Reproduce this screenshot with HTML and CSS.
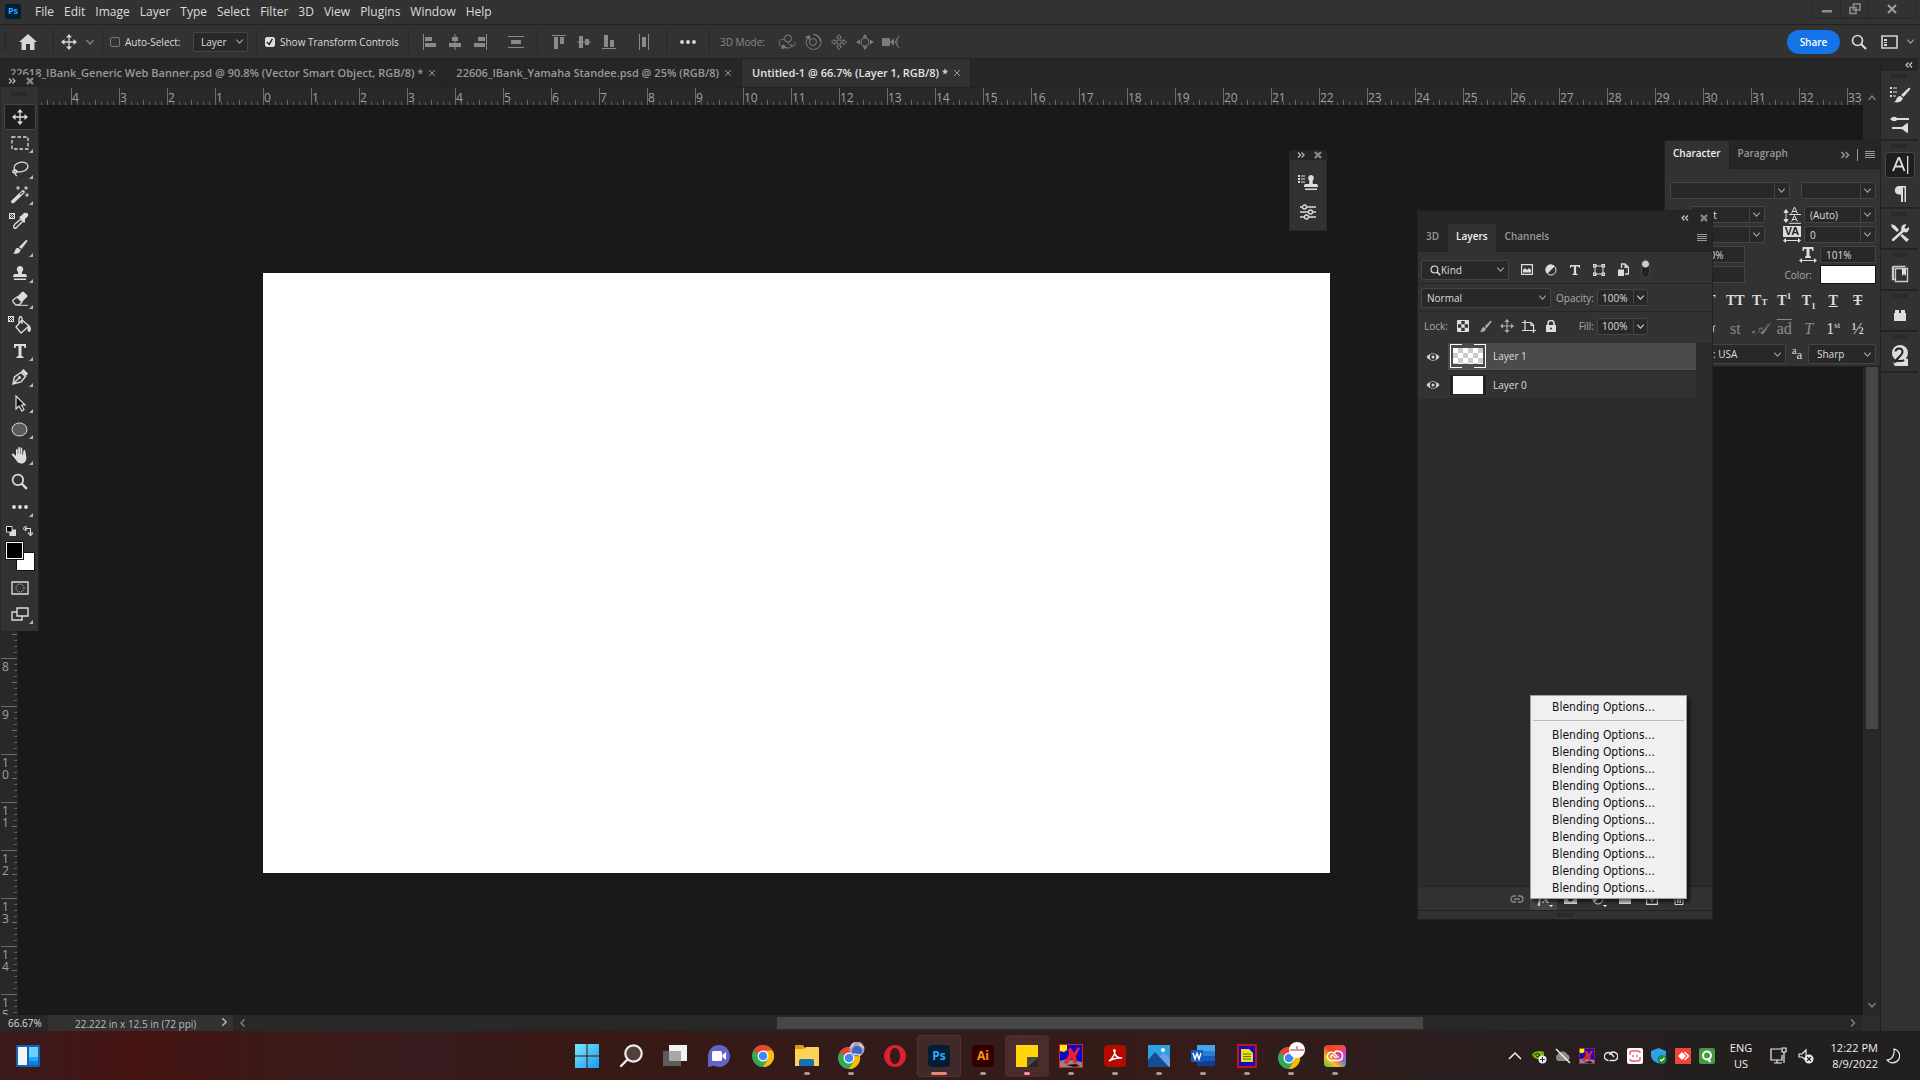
FILE: index.html
```html
<!DOCTYPE html>
<html lang="en">
<head>
<meta charset="utf-8">
<title>Untitled-1 @ 66.7%</title>
<link rel="stylesheet" href="styles.css">
</head>
<body>
<svg class="defs" aria-hidden="true">
  <symbol id="move" viewBox="0 0 16 16"><path d="M8 2.500v11M2.500 8h11" stroke="currentColor" stroke-width="1.300"/><path d="M8 0l3 3.500H5zM8 16l3-3.500H5zM0 8l3.500-3v6zM16 8l-3.500-3v6z" fill="currentColor"/></symbol>
  <symbol id="down" viewBox="0 0 10 10"><path d="M1.500 3L5 7l3.500-4" fill="none" stroke="currentColor" stroke-width="1.200"/></symbol>
  <symbol id="up" viewBox="0 0 10 10"><path d="M1.500 7L5 3l3.500 4" fill="none" stroke="currentColor" stroke-width="1.200"/></symbol>
  <symbol id="right" viewBox="0 0 10 10"><path d="M3 1.500L6.500 5 3 8.500" fill="none" stroke="currentColor" stroke-width="1.300"/></symbol>
  <symbol id="left" viewBox="0 0 10 10"><path d="M6.500 1.500L3 5l3.500 3.500" fill="none" stroke="currentColor" stroke-width="1.300"/></symbol>
  <symbol id="dbl-right" viewBox="0 0 10 10"><path d="M2 2.500L4.500 5 2 7.500M5.500 2.500L8 5 5.500 7.500" fill="none" stroke="currentColor" stroke-width="1.200"/></symbol>
  <symbol id="dbl-left" viewBox="0 0 10 10"><path d="M4.500 2.500L2 5l2.500 2.500M8 2.500L5.500 5 8 7.500" fill="none" stroke="currentColor" stroke-width="1.200"/></symbol>
  <symbol id="cross" viewBox="0 0 10 10"><path d="M2 2l6 6M8 2L2 8" stroke="currentColor" stroke-width="1"/></symbol>
  <symbol id="cross-bold" viewBox="0 0 10 10"><path d="M2 2l6 6M8 2L2 8" stroke="currentColor" stroke-width="2.400"/></symbol>
  <symbol id="lines" viewBox="0 0 12 10"><path d="M1 1.500h10M1 3.500h10M1 5.500h10M1 7.500h10" stroke="currentColor"/></symbol>
  <symbol id="stamp" viewBox="0 0 16 16"><path d="M8 1a3.200 3.200 0 0 1 2.500 5.200C9.500 7.500 9.600 8.500 10 9h3.500q1.500.5 1.500 3H1q0-2.500 1.500-3H6c.4-.5.500-1.500-.5-2.800A3.200 3.200 0 0 1 8 1zM2 13.500h12V15H2z" fill="currentColor"/></symbol>
  <symbol id="brush" viewBox="0 0 16 16"><path d="M15 1c.8.500.5 1 .2 1.500L9.500 10 7 8 13.500 1.500c.5-.5 1-.8 1.500-.5zM6.200 8.700l2.400 2C8.500 13.500 5 15.500 1 14.500c1.800-.8 1.600-2 2.200-3.500.6-1.500 1.700-2.200 3-2.300z" fill="currentColor"/></symbol>
  <symbol id="magnify" viewBox="0 0 16 16"><circle cx="6.500" cy="6.500" r="5" fill="none" stroke="currentColor" stroke-width="1.600"/><path d="M10 10l5 5" stroke="currentColor" stroke-width="2.200"/></symbol>
  <symbol id="chrome" viewBox="0 0 24 24"><circle cx="12" cy="12" r="11" fill="#34a853"/><path d="M12 12L2.500 6.500A11 11 0 0 1 21.500 6.500z" fill="#ea4335"/><path d="M12 6.500h9.600A11 11 0 0 1 12 23l5-8z" fill="#fbbc05"/><circle cx="12" cy="12" r="5.500" fill="#fff"/><circle cx="12" cy="12" r="4.300" fill="#4285f4"/></symbol>
  <symbol id="runner" viewBox="0 0 24 24"><path d="M0 0h24v24H0z" fill="#e01b24"/><path d="M1 1h22v22H1z" fill="#0a0ac8"/><path d="M1 1h7v5L5 8 1 7z" fill="#ffee00"/><path d="M1 17l7-2 15 3v5H1z" fill="#8b8b8b"/><path d="M7 21l10-1 4 2-6 1z" fill="#111"/><path d="M9 5l3-1 3 5 4-6 2 1-4 8 1 7-3 1-2-6-5 6-4-1 6-8z" fill="#f0202c"/></symbol>
  <symbol id="eye" viewBox="0 0 14 10"><path d="M0.500 5Q7-2.500 13.500 5 7 12.500.5 5z" fill="#d8d8d8"/><circle cx="7" cy="5" r="3.200" fill="#333"/><circle cx="7" cy="5" r="1.500" fill="#d8d8d8"/></symbol>
</svg>

<header class="menubar">
  <span class="ps-logo">Ps</span>
  <nav class="menus">
    <button>File</button><button>Edit</button><button>Image</button><button>Layer</button><button>Type</button><button>Select</button><button>Filter</button><button>3D</button><button>View</button><button>Plugins</button><button>Window</button><button>Help</button>
  </nav>
  <div class="window-buttons">
    <button aria-label="Minimize"><svg width="12" height="12" viewBox="0 0 12 12"><path d="M1 7h10v2.500H1z" fill="#8c8c8c"/></svg></button>
    <button aria-label="Restore"><svg width="12" height="12" viewBox="0 0 12 12"><path d="M4.500 1h6.500v6H4.500zM1 4.500h6v6H1z" fill="none" stroke="#8c8c8c" stroke-width="1.600"/></svg></button>
    <button class="wide" aria-label="Close"><svg width="12" height="12" viewBox="0 0 12 12"><path d="M2 2l8 8M10 2l-8 8" stroke="#a0a0a0" stroke-width="2"/></svg></button>
  </div>
</header>

<section class="options">
  <span class="grip-v"></span>
  <button class="cell home" aria-label="Home"><svg width="18" height="16" viewBox="0 0 18 16"><path d="M9 0l9 8h-2.500v8h-4.500v-6H7v6H2.500V8H0z" fill="#d6d6d6"/></svg></button>
  <button class="cell tool-pick" aria-label="Move tool"><svg width="16" height="16"><use href="#move"/></svg><svg class="dim" width="10" height="10"><use href="#down"/></svg></button>
  <div class="cell auto">
    <input type="checkbox" id="auto"><label for="auto">Auto-Select:</label>
    <select class="select layer-select" aria-label="Auto-select target"><option>Layer</option></select>
  </div>
  <div class="cell transform"><input type="checkbox" id="stc" checked><label for="stc">Show Transform Controls</label></div>
  <div class="cell align-h">
    <button aria-label="Align left"><svg width="14" height="16" viewBox="0 0 14 16"><path d="M.5 0v16" stroke="#8a8a8a"/><path d="M2 3h7v4H2zM2 9h11v4H2z" fill="#8a8a8a"/></svg></button>
    <button aria-label="Align centers"><svg width="14" height="16" viewBox="0 0 14 16"><path d="M7 0v16" stroke="#8a8a8a"/><path d="M4 3h6v4H4zM1 9h12v4H1z" fill="#8a8a8a"/></svg></button>
    <button aria-label="Align right"><svg width="14" height="16" viewBox="0 0 14 16"><path d="M13.500 0v16" stroke="#8a8a8a"/><path d="M5 3h7v4H5zM1 9h11v4H1z" fill="#8a8a8a"/></svg></button>
    <button class="spaced" aria-label="Distribute"><svg width="16" height="12" viewBox="0 0 16 12"><path d="M0 .5h16M0 11.500h16" stroke="#8a8a8a"/><path d="M3 4h10v4H3z" fill="#8a8a8a"/></svg></button>
  </div>
  <div class="cell align-v">
    <button aria-label="Align top"><svg width="14" height="14" viewBox="0 0 14 14"><path d="M0 .5h14" stroke="#8a8a8a"/><path d="M2 2h4v12H2zM8 2h4v7H8z" fill="#8a8a8a"/></svg></button>
    <button aria-label="Align middles"><svg width="14" height="14" viewBox="0 0 14 14"><path d="M0 7h14" stroke="#8a8a8a"/><path d="M2 1h4v12H2zM8 4h4v6H8z" fill="#8a8a8a"/></svg></button>
    <button aria-label="Align bottom"><svg width="14" height="14" viewBox="0 0 14 14"><path d="M0 13.500h14" stroke="#8a8a8a"/><path d="M2 0h4v12H2zM8 5h4v7H8z" fill="#8a8a8a"/></svg></button>
    <button class="spaced" aria-label="Distribute widths"><svg width="10" height="16" viewBox="0 0 10 16"><path d="M.5 0v16M9.500 0v16" stroke="#8a8a8a"/><path d="M3 3h4v10H3z" fill="#8a8a8a"/></svg></button>
  </div>
  <button class="cell dots" aria-label="More"><svg width="16" height="4" viewBox="0 0 16 4"><circle cx="2" cy="2" r="1.900"/><circle cx="8" cy="2" r="1.900"/><circle cx="14" cy="2" r="1.900"/></svg></button>
  <div class="cell mode3d">
    <span>3D Mode:</span>
    <svg width="18" height="16" viewBox="0 0 18 16"><path d="M5 13C1 12 0 8 3 5.500 7 4 10 10 14 12c3 1 4-2 2-4.500M6 13c5 2 8 1 8-3" fill="none"/><circle cx="10" cy="4.500" r="3.500" fill="none"/><path d="M3 15l6-1-4-4z" class="f"/></svg>
    <svg width="18" height="16" viewBox="0 0 18 16"><circle cx="9" cy="8" r="3.500" fill="none"/><path d="M4 3a7.500 7.500 0 1 0 5-2.500 7 7 0 0 1 7 7" fill="none"/><path d="M1 3l5-2v5z" class="f"/></svg>
    <svg width="18" height="16" viewBox="0 0 18 16"><path d="M9 .5l2.500 3H10V7h3.500V5.500l3 2.500-3 2.500V9H10v3.500h1.500L9 15.500l-2.500-3H8V9H4.500v1.500L1.500 8l3-2.500V7H8V3.500H6.500z" fill="none"/></svg>
    <svg width="18" height="16" viewBox="0 0 18 16"><circle cx="9" cy="8" r="4" fill="none"/><path d="M9 0l2.500 3.500h-5zM9 16l2.500-3.500h-5zM0 8l4-2.500v5zM18 8l-4-2.500v5z" class="f"/></svg>
    <svg width="18" height="16" viewBox="0 0 18 16"><path d="M0 4h8v8H0zM8 8l4-4v8z" class="f"/><path d="M17 2l-4 6 4 6M15 5v6" fill="none"/></svg>
  </div>
  <div class="right-tools">
    <button class="share">Share</button>
    <button aria-label="Search"><svg width="16" height="16"><use href="#magnify"/></svg></button>
    <button class="workspace-switch" aria-label="Workspace"><svg width="17" height="14" viewBox="0 0 17 14"><path d="M1 1h15v12H1z" fill="none" stroke="#d6d6d6" stroke-width="1.600"/><path d="M3 4h3v2H3zM3 7h3v1H3zM3 9h3v2H3z" fill="#d6d6d6"/></svg></button>
    <svg width="9" height="9"><use href="#down"/></svg>
  </div>
</section>

<main class="workspace">
  <section class="document">
    <div class="tabs">
      <div class="tab"><span>22618_IBank_Generic Web Banner.psd @ 90.8% (Vector Smart Object, RGB/8) *</span><button aria-label="Close"><svg width="10" height="10"><use href="#cross"/></svg></button></div>
      <div class="tab"><span>22606_IBank_Yamaha Standee.psd @ 25% (RGB/8)</span><button aria-label="Close"><svg width="10" height="10"><use href="#cross"/></svg></button></div>
      <div class="tab active"><span>Untitled-1 @ 66.7% (Layer 1, RGB/8) *</span><button aria-label="Close"><svg width="10" height="10"><use href="#cross"/></svg></button></div>
    </div>
    <div class="doc-body">
      <div class="view">
        <div class="ruler-h"><span>5</span><span>4</span><span>3</span><span>2</span><span>1</span><span>0</span><span>1</span><span>2</span><span>3</span><span>4</span><span>5</span><span>6</span><span>7</span><span>8</span><span>9</span><span>10</span><span>11</span><span>12</span><span>13</span><span>14</span><span>15</span><span>16</span><span>17</span><span>18</span><span>19</span><span>20</span><span>21</span><span>22</span><span>23</span><span>24</span><span>25</span><span>26</span><span>27</span><span>28</span><span>29</span><span>30</span><span>31</span><span>32</span><span>33</span></div>
        <div class="view-row">
          <div class="ruler-v"><span>3</span><span>2</span><span>1</span><span>0</span><span>1</span><span>2</span><span>3</span><span>4</span><span>5</span><span>6</span><span>7</span><span>8</span><span>9</span><span>10</span><span>11</span><span>12</span><span>13</span><span>14</span><span>15</span></div>
          <div class="canvas"><div class="artboard"></div></div>
        </div>
      </div>
      <div class="scroll-v"><svg width="10" height="10"><use href="#up"/></svg><i class="space-a"></i><i class="thumb"></i><i class="space-b"></i><svg width="10" height="10"><use href="#down"/></svg></div>
    </div>
    <footer class="status">
      <span class="zoom">66.67%</span>
      <span class="info"><span>22.222 in x 12.5 in (72 ppi)</span><svg width="11" height="12"><use href="#right"/></svg></span>
      <div class="scroll-h"><svg width="10" height="10"><use href="#left"/></svg><i class="space-a"></i><i class="thumb"></i><i class="space-b"></i><svg width="10" height="10"><use href="#right"/></svg></div>
      <span class="corner"></span>
    </footer>
  </section>

  <aside class="dock">
    <div class="dock-head"><svg width="10" height="10"><use href="#dbl-left"/></svg></div>
    <div class="dock-group"><i class="grip"></i>
      <button aria-label="Brush settings"><svg width="22" height="20" viewBox="0 0 22 20"><path d="M1 2h2v2H1zM1 6h2v2H1zM1 10h2v2H1zM4 2.500h4v1H4zM4 6.500h4v1H4zM4 10.500h3v1H4z"/><path d="M21 3c.8.5 0 1.500 0 1.500L14.500 12 12 10l7-6.500S20.300 2.500 21 3zM11.500 11l2.200 2c0 3-4 5.500-8.700 4 2-.6 2-2.200 3-4 .7-1.300 2-2 3.500-2z"/></svg></button>
      <button aria-label="Brushes"><svg width="22" height="18" viewBox="0 0 22 18"><path d="M1 4q4-4 7-1h12v2H8Q5 8 1 4zM3 12h9c3 0 3-3 7-4v10c-4-1-4-4-7-4H3z"/></svg></button></div>
    <div class="dock-group"><i class="grip"></i>
      <button class="on" aria-label="Character"><svg width="20" height="20" viewBox="0 0 20 20"><path d="M3 16L8.500 3h.8L14.500 16M5 11.500h8" fill="none" stroke="#ddd" stroke-width="1.900"/><path d="M17 1h1.300v18H17z"/></svg></button>
      <button aria-label="Paragraph"><svg width="16" height="18" viewBox="0 0 16 18"><path d="M7 1h7v16h-1.500V2.500h-1.500V17H9V9.500H7A4 4 0 0 1 7 1z"/></svg></button></div>
    <div class="dock-group"><i class="grip"></i>
      <button aria-label="Tool presets"><svg width="20" height="20" viewBox="0 0 20 20"><path d="M1 1l4 1.500 4 4.500-2 2-5-4.500zM12 11l7 5.500-2.500 2.500L10.500 13z"/><path d="M3 17L14 7" stroke="#ddd" stroke-width="2.500" stroke-linecap="round"/><path d="M19 4l-3 2-1.500-1.500 2-3a4 4 0 1 0 2.500 5z"/></svg></button></div>
    <div class="dock-group"><i class="grip"></i>
      <button aria-label="Libraries"><svg width="18" height="18" viewBox="0 0 18 18"><path d="M4.500 3.500h12v13h-12zM2.500 14V1.500h12M1.500 1.500v13h3" fill="none" stroke="#ccc" stroke-width="1.300"/><path d="M11 4h4v7l-2-2-2 2z"/></svg></button></div>
    <div class="dock-group"><i class="grip"></i>
      <button aria-label="Plugins"><svg width="14" height="14" viewBox="0 0 14 14"><path d="M1 5h1V2h4v3h2V2h4v3h1v8H1z"/></svg></button></div>
    <div class="dock-group"><i class="grip"></i>
      <button aria-label="Glyphs"><svg width="20" height="22" viewBox="0 0 20 22"><circle cx="10" cy="8" r="8"/><path d="M3 18l8-6 7 2v7H5z"/><path d="M5.500 6.500c.5-4 7.500-4 7 .5-.3 4-6 6-7 9.500 3-2 6 1 8.500-1.500" fill="none" stroke="#222" stroke-width="2"/></svg></button></div>
  </aside>

  <aside class="toolbar">
    <div class="bar-head"><svg width="10" height="10"><use href="#dbl-right"/></svg><svg width="10" height="10"><use href="#cross-bold"/></svg></div>
    <i class="grip"></i>
    <button class="tool on" aria-label="Move"><svg width="16" height="16"><use href="#move"/></svg></button>
    <button class="tool more" aria-label="Marquee"><svg width="18" height="14" viewBox="0 0 18 14"><path d="M1 1h16v12H1z" fill="none" stroke="#ddd" stroke-width="1.300" stroke-dasharray="3.500 2"/></svg></button>
    <button class="tool more" aria-label="Lasso"><svg width="18" height="16" viewBox="0 0 18 16"><g fill="none" stroke="#ddd" stroke-width="1.300"><ellipse cx="10" cy="6" rx="7" ry="4.800" transform="rotate(-12 10 6)"/><path d="M4 9c-3 0-3 3 0 3s2-3 0-3c-1 2 0 5 2 6"/></g></svg></button>
    <button class="tool more" aria-label="Magic wand"><svg width="20" height="18" viewBox="0 0 20 18"><path d="M3 15.500L13 6" stroke="#ddd" stroke-width="3.600" stroke-linecap="round"/><path d="M10 8.500l3-2.500" stroke="#444" stroke-width="1.500"/><path d="M8 0v4M6 2h4M16 0v4M14 2h4M17 7v4M15 9h4" stroke="#ddd"/></svg></button>
    <button class="tool" aria-label="Eyedropper"><svg width="22" height="18" viewBox="0 0 22 18"><path d="M0 1h6v6H0z"/><path d="M1 2h1v1H1zM3 2h1v1H3zM2 3h1v1H2zM4 3h1v1H4zM1 4h1v1H1zM3 4h1v1H3zM2 5h1v1H2zM4 5h1v1H4z" fill="#222"/><path d="M5 16c-1-2 0-3 1-4l6-5 2 2-6 6c-1 1-2 2-3 1z" fill="none" stroke="#ddd" stroke-width="1.400"/><path d="M10 5l2-1 3-3c3-1 5 1 4 3l-3 3v3l-1 1z"/></svg></button>
    <button class="tool more" aria-label="Brush"><svg width="16" height="16"><use href="#brush"/></svg></button>
    <button class="tool more" aria-label="Clone stamp"><svg width="16" height="16"><use href="#stamp"/></svg></button>
    <button class="tool more" aria-label="Eraser"><svg width="18" height="16" viewBox="0 0 18 16"><path d="M6 6l5-5q1-1 2 0l3 3q1 1 0 2l-5 5z"/><path d="M6 6l5 5-3 3H5l-3-3V9z" fill="none" stroke="#ddd" stroke-width="1.300"/><path d="M7 14.300h10" stroke="#ddd"/></svg></button>
    <button class="tool" aria-label="Paint bucket"><svg width="24" height="20" viewBox="0 0 24 20"><path d="M0 1h6v6H0z"/><path d="M1 2h1v1H1zM3 2h1v1H3zM2 3h1v1H2zM4 3h1v1H4zM1 4h1v1H1zM3 4h1v1H3zM2 5h1v1H2zM4 5h1v1H4z" fill="#222"/><path d="M8 12l6-7 7 6-8 7zM11 9V4c0-3 3-3 3 0v5" fill="none" stroke="#ddd" stroke-width="1.300"/><path d="M21 10c3 3 2 7 0 7s-2-4 0-7z"/></svg></button>
    <button class="tool more" aria-label="Type"><svg width="14" height="14" viewBox="0 0 14 14"><path d="M1 0h12v4h-1.500L11 2H8.500v10l2 .7V14h-7v-1.300l2-.7V2H3L2.500 4H1z"/></svg></button>
    <button class="tool more" aria-label="Pen"><svg width="18" height="16" viewBox="0 0 18 16"><path d="M2 15l1.500-7L10 3.500l4.500 4L10 13zM2 15l6-6" fill="none" stroke="#ddd" stroke-width="1.400"/><circle cx="8.500" cy="8.500" r="1.500"/><path d="M10 2.500L12.500 0 17 4.500 15 7z"/></svg></button>
    <button class="tool more" aria-label="Path selection"><svg width="14" height="17" viewBox="0 0 14 17"><path d="M3 1v13l3-3 3 5 2-1.500L8.500 10H12z" fill="#111" stroke="#ddd" stroke-width="1.200"/></svg></button>
    <button class="tool more" aria-label="Ellipse"><svg width="17" height="15" viewBox="0 0 17 15"><ellipse cx="8.500" cy="7.500" rx="7.500" ry="6.500" fill="#5a5a5a" stroke="#ddd"/></svg></button>
    <button class="tool more" aria-label="Hand"><svg width="17" height="17" viewBox="0 0 17 17"><path d="M5 13L1 8c-1-1.500 1-2 2-1l2 2V3c0-1.500 1.800-1.500 1.800 0v4h.4V1.200c0-1.500 1.800-1.500 1.800 0V7h.5V1.700c0-1.500 1.800-1.500 1.800 0V8h.5l.7-4c.3-1.500 2-1 1.800.3L15.500 11c-.5 4-2.500 5.500-5 5.500S6.500 15.500 5 13z"/></svg></button>
    <button class="tool" aria-label="Zoom"><svg width="17" height="17"><use href="#magnify"/></svg></button>
    <button class="tool more" aria-label="Edit toolbar"><svg width="16" height="4" viewBox="0 0 16 4"><circle cx="2" cy="2" r="1.900"/><circle cx="8" cy="2" r="1.900"/><circle cx="14" cy="2" r="1.900"/></svg></button>
    <div class="mini"><svg width="10" height="10" viewBox="0 0 10 10"><path d="M3.500 3.500H10V10H3.500z"/><path d="M.5.5h5.500v5.500H.5z" fill="#000" stroke="#ddd"/></svg><svg width="10" height="10" viewBox="0 0 10 10"><path d="M2 2.500h5.500V9M0 2.500L3 0v5zM7.500 10L5 7h5z" stroke="#ddd" fill="none"/></svg></div>
    <div class="swatches"><button class="back" aria-label="Background color"></button><button class="front" aria-label="Foreground color"></button></div>
    <button class="tool" aria-label="Quick mask"><svg width="18" height="14" viewBox="0 0 18 14"><path d="M1 1h16v12H1z" fill="none" stroke="#ddd" stroke-width="1.300"/><circle cx="9" cy="7" r="4" fill="none" stroke="#ddd" stroke-dasharray="1 1.100"/></svg></button>
    <button class="tool more" aria-label="Screen mode"><svg width="18" height="14" viewBox="0 0 18 14"><path d="M1 5h10v8H1z" fill="none" stroke="#ddd" stroke-width="1.400"/><path d="M6 1h11v8H6z" fill="#323232" stroke="#ddd" stroke-width="1.400"/></svg></button>
  </aside>

  <aside class="mini-panel">
    <div class="bar-head"><svg width="10" height="10"><use href="#dbl-right"/></svg><svg width="10" height="10"><use href="#cross-bold"/></svg></div>
    <i class="grip"></i>
    <button aria-label="Clone source"><svg width="22" height="18" viewBox="0 0 22 18"><path d="M1 2h2v2H1zM1 5h2v2H1zM1 8h2v2H1zM4 2.500h4v1H4zM4 5.500h4v1H4zM4 8.500h4v1H4z"/><path d="M14 2a3 3 0 0 1 2.300 4.800C15.300 8 15.500 10 16 11h4q1 .5 1 3H7q0-2.500 1-3h4c.5-1 .7-3-.3-4.200A3 3 0 0 1 14 2zM8 15.500h12V17H8z"/></svg></button>
    <button aria-label="Adjustments"><svg width="18" height="16" viewBox="0 0 18 16"><g fill="none" stroke="#ddd" stroke-width="1.300"><path d="M1 3h2M8 3h9M1 8h8M14 8h3M1 13h4M10 13h7"/><circle cx="5.500" cy="3" r="2"/><circle cx="11.500" cy="8" r="2"/><circle cx="7.500" cy="13" r="2"/></g></svg></button>
  </aside>

  <section class="panel character">
    <div class="panel-tabs"><button class="active">Character</button><button>Paragraph</button><span class="fill"></span><svg class="tab-arrows" width="12" height="12"><use href="#dbl-right"/></svg><i class="bar"></i><svg width="12" height="10"><use href="#lines"/></svg></div>
    <div class="char-body">
      <div class="row"><select class="select split family" aria-label="Font family"><option></option></select><select class="select split style" aria-label="Font style"><option></option></select></div>
      <div class="row tight"><span class="glyph">TT</span><select class="select split size" aria-label="Font size"><option>12 pt</option></select><svg class="lead" width="18" height="18" viewBox="0 0 18 18"><path d="M3 5v10M1 6.500L3 3.500l2 3zM1 13.500l2 3 2-3z" stroke="#ddd" fill="#ddd"/><path d="M8.500 7.500L11.500 1l3 6.500M9.500 5.500h4M8.500 15.500l3-6 3 6M9.500 13.500h4M6 8.500h12M6 17.300h12" fill="none" stroke="#ddd"/></svg><select class="select split lead-val" aria-label="Leading"><option>(Auto)</option></select></div>
      <div class="row tight"><span class="glyph">VA</span><select class="select split size" aria-label="Kerning"><option>0</option></select><span class="va-icon lead"><span>VA</span><svg width="18" height="5" viewBox="0 0 18 5"><path d="M2 2.500h14" stroke="#ddd"/><path d="M0 2.500L3 0v5zM18 2.500L15 0v5z"/></svg></span><select class="select split lead-val" aria-label="Tracking"><option>0</option></select></div>
      <div class="row tight"><input class="field scale" aria-label="Vertical scale" value="100%"><svg class="lead" width="18" height="17" viewBox="0 0 18 17"><path d="M3.500 1h11v4h-1.200l-.5-2h-2.300v7l1.500.5v1.500h-6v-1.500l1.500-.5V3H5.200l-.5 2H3.500zM0 14.500L3 12v5zM18 14.500L15 12v5z"/><path d="M2 14.500h14" stroke="#ddd"/></svg><input class="field hscale" aria-label="Horizontal scale" value="101%"></div>
      <div class="row tight color-row"><input class="field shift" aria-label="Baseline shift" value="0 pt"><span class="color-label">Color:</span><button class="color" aria-label="Text color"></button></div>
      <div class="glyph-row"><button>T</button><button><em>T</em></button><button>TT</button><button>T<small>T</small></button><button>T<sup>1</sup></button><button>T<sub>1</sub></button><button><u>T</u></button><button><s>T</s></button></div>
      <div class="glyph-row light"><button>fi</button><button class="lit"><em>&#x3c3;</em></button><button>st</button><button><em>&#x1D49C;</em></button><button class="over">ad</button><button><em>T</em></button><button class="lit">1<sup>st</sup></button><button class="lit">½</button></div>
      <div class="row last"><select class="select lang" aria-label="Language"><option>English: USA</option></select><span class="aa"><sup>a</sup>a</span><select class="select sharp" aria-label="Anti-aliasing"><option>Sharp</option></select></div>
    </div>
  </section>

  <section class="panel layers">
    <div class="panel-head"><svg width="10" height="10"><use href="#dbl-left"/></svg><svg width="10" height="10"><use href="#cross-bold"/></svg></div>
    <div class="panel-tabs"><button>3D</button><button class="active">Layers</button><button>Channels</button><span class="fill"></span><svg width="12" height="10"><use href="#lines"/></svg></div>
    <div class="filter-row">
      <span class="kind-wrap"><svg width="11" height="11"><use href="#magnify"/></svg><select class="select kind" aria-label="Filter kind"><option>Kind</option></select></span>
      <button aria-label="Pixel layers"><svg width="12" height="11" viewBox="0 0 12 11"><path d="M.6.6h10.800v9.800H.6z" fill="none" stroke="#ddd" stroke-width="1.200"/><path d="M2 8.500V6l2-2 2 2 2-2 2 2v2.500z"/></svg></button>
      <button aria-label="Adjustment layers"><svg width="12" height="12" viewBox="0 0 12 12"><circle cx="6" cy="6" r="5" fill="none" stroke="#ddd"/><path d="M9.500 2.500A5 5 0 1 0 2.500 9.500z"/></svg></button>
      <button aria-label="Type layers"><svg width="10" height="10" viewBox="0 0 14 14"><path d="M0 0h14v4h-1.500L12 2H8.500v10l2 .7V14h-7v-1.300l2-.7V2H2L1.500 4H0z"/></svg></button>
      <button aria-label="Shape layers"><svg width="12" height="12" viewBox="0 0 12 12"><path d="M2 2h8v8H2z" fill="none" stroke="#ddd"/><path d="M0 0h3.500v3.500H0zM8.500 0H12v3.500H8.500zM0 8.500h3.500V12H0zM8.500 8.500H12V12H8.500z"/><path d="M1.200 1.200h1v1h-1zM9.700 1.200h1v1h-1zM1.200 9.700h1v1h-1zM9.700 9.700h1v1h-1z" fill="#333"/></svg></button>
      <button aria-label="Smart objects"><svg width="11" height="13" viewBox="0 0 11 13"><path d="M3.500 5V1H7l3.500 3.500V11H7" fill="none" stroke="#ddd" stroke-width="1.300"/><path d="M0 6.500h6V13H0zM6.500 1v4H10z"/></svg></button>
      <i class="toggle"></i>
    </div>
    <div class="blend-row"><select class="select normal" aria-label="Blend mode"><option>Normal</option></select><label for="opacity">Opacity:</label><span class="pct"><input id="opacity" value="100%"><svg width="9" height="9"><use href="#down"/></svg></span></div>
    <div class="lock-row"><span class="lock-label">Lock:</span>
      <button aria-label="Lock transparency"><svg width="12" height="12" viewBox="0 0 12 12"><path d="M.5.5h11v11H.5z" fill="none" stroke="#ddd"/><path d="M1 1h3.300v3.300H1zM7.700 1H11v3.300H7.700zM4.300 4.300h3.400v3.400H4.300zM1 7.700h3.300V11H1zM7.700 7.700H11V11H7.700z"/></svg></button>
      <button aria-label="Lock pixels"><svg width="13" height="13"><use href="#brush"/></svg></button>
      <button aria-label="Lock position"><svg width="14" height="14"><use href="#move"/></svg></button>
      <button aria-label="Lock artboard"><svg width="14" height="13" viewBox="0 0 14 13"><path d="M3 0v11M0 2.500h9l2.500 2.500v8M0 10.500h14M9 3v2.500h2.500" fill="none" stroke="#ddd" stroke-width="1.200"/></svg></button>
      <button aria-label="Lock all"><svg width="10" height="12" viewBox="0 0 10 12"><path d="M0 5h10v7H0z"/><path d="M2 5V3.500a3 3 0 0 1 6 0V5" fill="none" stroke="#ddd" stroke-width="1.600"/><circle cx="5" cy="8.500" r="1" fill="#333"/></svg></button>
      <label for="fillv">Fill:</label><span class="pct"><input id="fillv" value="100%"><svg width="9" height="9"><use href="#down"/></svg></span></div>
    <ul class="layer-list">
      <li class="selected"><button class="eye" aria-label="Hide Layer 1"><svg width="14" height="10"><use href="#eye"/></svg></button><div class="layer"><span class="thumb-frame"><i class="checker"></i></span>Layer 1</div></li>
      <li><button class="eye" aria-label="Hide Layer 0"><svg width="14" height="10"><use href="#eye"/></svg></button><div class="layer"><span class="thumb-plain"></span>Layer 0</div></li>
    </ul>
    <div class="layer-actions">
      <button aria-label="Link"><svg width="14" height="8" viewBox="0 0 14 8"><path d="M6 1H4a3 3 0 0 0 0 6h2M8 1h2a3 3 0 0 1 0 6H8M4 4h6" fill="none" stroke="#8a8a8a" stroke-width="1.300"/></svg></button>
      <button class="fx" aria-label="Layer style"><em>fx</em></button>
      <button aria-label="Mask"><svg width="13" height="10" viewBox="0 0 13 10"><path d="M0 0h13v10H0z"/><circle cx="6.500" cy="5" r="2.500" fill="#333"/></svg></button>
      <button class="caret" aria-label="Adjustment"><svg width="12" height="12" viewBox="0 0 12 12"><circle cx="6" cy="6" r="5" fill="none" stroke="#ddd"/><path d="M9.500 2.500A5 5 0 1 0 2.500 9.500z"/></svg></button>
      <button aria-label="Group"><svg width="12" height="10" viewBox="0 0 12 10"><path d="M0 0h5l1 2h6v8H0z"/></svg></button>
      <button aria-label="New layer"><svg width="12" height="12" viewBox="0 0 12 12"><path d="M.6.6h10.800v10.800H.6zM6 3v6M3 6h6" fill="none" stroke="#ddd" stroke-width="1.200"/></svg></button>
      <button aria-label="Delete"><svg width="10" height="13" viewBox="0 0 10 13"><path d="M0 2.500h10M3 2V.5h4V2M1 3v9.500h8V3M3.500 4v7M5 4v7M6.500 4v7" fill="none" stroke="#ddd"/></svg></button>
    </div>
    <div class="panel-grip"><i class="grip"></i></div>
    <div class="context-menu">
      <button>Blending Options...</button><hr>
      <button>Blending Options...</button><button>Blending Options...</button><button>Blending Options...</button><button>Blending Options...</button><button>Blending Options...</button><button>Blending Options...</button><button>Blending Options...</button><button>Blending Options...</button><button>Blending Options...</button><button>Blending Options...</button>
    </div>
  </section>
</main>

<footer class="taskbar">
  <div class="widgets"><button aria-label="Widgets"><svg width="24" height="22" viewBox="0 0 24 22"><rect width="24" height="22" rx="1.500" fill="#1264ae"/><path d="M2 2h9v18H2z" fill="#f4f4f6"/><path d="M13 2h9v10h-9z" fill="#69d2fb"/><path d="M13 12h9v4h-9z" fill="#22a5f5"/><path d="M13 16h9v4h-9z" fill="#0a80e0"/></svg></button></div>
  <nav class="apps">
    <button aria-label="Start"><svg width="24" height="24" viewBox="0 0 24 24"><defs><linearGradient id="win" x2="1" y2="1"><stop stop-color="#7fe6fb"/><stop offset="1" stop-color="#149bf2"/></linearGradient></defs><path d="M0 0h11.500v11.500H0zM12.500 0H24v11.500H12.500zM0 12.500h11.500V24H0zM12.500 12.500H24V24H12.500z" fill="url(#win)"/></svg></button>
    <button aria-label="Search"><svg width="24" height="24" viewBox="0 0 24 24"><circle cx="14.500" cy="9.500" r="8.200" fill="#54403e" stroke="#f0eeee" stroke-width="2.200"/><path d="M8.500 15.500L2 22" stroke="#f0eeee" stroke-width="2.400" stroke-linecap="round"/></svg></button>
    <button aria-label="Task view"><svg width="24" height="24" viewBox="0 0 24 24"><path d="M6 1h18v16H6z" fill="#f2f2f2"/><path d="M0 7h18v15H0z" fill="#5c5c5c"/><path d="M6 7h12v10H6z" fill="#a7a7a7"/></svg></button>
    <button aria-label="Chat"><svg width="24" height="24" viewBox="0 0 24 24"><path d="M12 1a11 11 0 1 1-5 20.800L1 23V12A11 11 0 0 1 12 1z" fill="#6264c8"/><rect x="5" y="7" width="10" height="10" rx="1.500" fill="#fff"/><path d="M15.500 11l3.500-3v8l-3.500-3z" fill="#fff"/></svg></button>
    <button aria-label="Chrome"><svg width="24" height="24"><use href="#chrome"/></svg></button>
    <button class="open" aria-label="File Explorer"><svg width="24" height="24" viewBox="0 0 24 24"><path d="M0 2q0-1 1-1h7l2 3v4H0z" fill="#d99b10"/><path d="M0 5h9l2-2h12q1 0 1 1v18H0z" fill="#fdd256"/><path d="M4 22v-5q0-2 2-2h11q2 0 2 2v5z" fill="#1670b8"/></svg></button>
    <button class="open" aria-label="Chrome, profile 1"><svg width="28" height="28" viewBox="0 0 28 28"><use href="#chrome" x="0" y="4" width="24" height="24"/><circle cx="20" cy="7" r="7.500" fill="#a99fb5"/><circle cx="20" cy="9" r="5" fill="#3b66c4"/><path d="M13 6l4-5M22 2l5 4M16 12l8 1" stroke="#dcd3cc" stroke-width="1.500"/></svg></button>
    <button aria-label="Opera"><svg width="24" height="24" viewBox="0 0 24 24"><path d="M12 1a11 11 0 1 0 0 22 11 11 0 0 0 0-22zm0 3c3 0 5 3.500 5 8s-2 8-5 8-5-3.500-5-8 2-8 5-8z" fill="#e21e34" fill-rule="evenodd"/></svg></button>
    <button class="open current" aria-label="Photoshop"><span class="adobe ps">Ps</span></button>
    <button class="open" aria-label="Illustrator"><span class="adobe ai">Ai</span></button>
    <button class="open notes" aria-label="Sticky Notes"><svg width="22" height="22" viewBox="0 0 22 22"><path d="M0 0h22v22H0z" fill="#ffd60a"/><path d="M11 22V12h11z" fill="#4a4a4a"/><path d="M11 22l11-10v10z" fill="#2d2424"/></svg></button>
    <button class="open" aria-label="Utility"><svg width="24" height="24"><use href="#runner"/></svg></button>
    <button class="open" aria-label="Acrobat"><svg width="22" height="22" viewBox="0 0 22 22"><rect width="22" height="22" rx="4" fill="#b30b00"/><path d="M5 16c2-1 6-6 6-10 0-2-1.500-1-1 0 1 5 4 7 7 7s-6-1-12 3z" fill="none" stroke="#fff" stroke-width="1.500"/></svg></button>
    <button class="open" aria-label="Photos"><svg width="22" height="22" viewBox="0 0 22 22"><path d="M0 0h22v22H0z" fill="#2e9fe0"/><path d="M10 12l6-4 6 6v8h-8z" fill="#6d9fe8"/><path d="M0 15L7 7l14 15H0z" fill="#124e93"/><circle cx="15" cy="5" r="2" fill="#fff"/></svg></button>
    <button class="open" aria-label="Word"><svg width="24" height="22" viewBox="0 0 24 22"><path d="M6 0h18v6H6z" fill="#41a5ee"/><path d="M6 6h18v5H6z" fill="#2b7cd3"/><path d="M6 11h18v5H6z" fill="#185abd"/><path d="M6 16h18v5H6z" fill="#103f91"/><path d="M0 5h12v12H0z" fill="#185abd"/><path d="M2 8l2 6 2-5.500L8 14l2-6" fill="none" stroke="#fff" stroke-width="1.500"/></svg></button>
    <button class="open" aria-label="Document tool"><svg width="20" height="24" viewBox="0 0 20 24"><path d="M1 1h18v22H1z" fill="#1408c4" stroke="#c4131c" stroke-width="2"/><path d="M4 5h8l4 4v9H4z" fill="#e6e21a"/><path d="M6 10h8M6 12.500h8M6 15h8" stroke="#6c6a10"/></svg></button>
    <button class="open" aria-label="Chrome, profile 2"><svg width="28" height="28" viewBox="0 0 28 28"><use href="#chrome" x="0" y="4" width="24" height="24"/><circle cx="20" cy="8" r="8" fill="#fff"/><path d="M13 8h14M20 4v3" stroke="#a33" stroke-width="1"/></svg></button>
    <button class="open" aria-label="Creative Cloud"><svg width="22" height="22" viewBox="0 0 22 22"><defs><linearGradient id="cc" x2="1" y2="1"><stop stop-color="#e53a2e"/><stop offset=".35" stop-color="#f0501c"/><stop offset=".6" stop-color="#e63aa5"/><stop offset="1" stop-color="#24a8e8"/></linearGradient><linearGradient id="cc2" x1="0" y1="1" x2=".5" y2=".4"><stop stop-color="#3fc23f"/><stop offset=".5" stop-color="#f4c51c"/><stop offset="1" stop-color="#f4a51c" stop-opacity="0"/></linearGradient></defs><rect width="22" height="22" rx="4" fill="url(#cc)"/><rect width="22" height="22" rx="4" fill="url(#cc2)"/><path d="M8 15.500a4.200 4.200 0 1 1 2.500-7l4 4M8 15.500h6a4.700 4.700 0 1 0-4.500-6.500M8 12.500a1.300 1.300 0 1 1 1-2.300l3.500 3" fill="none" stroke="#fff" stroke-width="1.400"/></svg></button>
  </nav>
  <div class="tray">
    <button aria-label="Show hidden icons"><svg width="14" height="14" viewBox="0 0 14 14"><path d="M1 10l6-6 6 6" fill="none" stroke="#f2f2f2" stroke-width="1.500"/></svg></button>
    <button aria-label="NVIDIA"><svg width="16" height="16" viewBox="0 0 16 16"><path d="M1 2h12v10H1z" fill="#222"/><path d="M1 6q5-5 12-2v7H6Q2 10 1 6z" fill="#76b900"/><path d="M3 7q4-3 6 0-2 3-4 1" fill="none" stroke="#222"/><circle cx="11.500" cy="11.500" r="4" fill="#eee"/><path d="M11.500 9v5M9 11.500h5" stroke="#333"/></svg></button>
    <button aria-label="OneDrive"><svg width="18" height="16" viewBox="0 0 18 16"><path d="M4 13a4 4 0 0 1 0-7 5 5 0 0 1 9 0 4 4 0 0 1 1 7z" fill="#8d8a8a"/><path d="M2 1l14 14" stroke="#eee" stroke-width="1.500"/></svg></button>
    <button aria-label="Utility"><svg width="16" height="16"><use href="#runner"/></svg></button>
    <button aria-label="Creative Cloud"><svg width="14" height="12" viewBox="0 0 14 12"><path d="M4.500 10.500a4 4 0 1 1 3-6.500l2.500 3M5.500 10.500h4a4.200 4.200 0 1 0-4-5.500" fill="none" stroke="#e8e8e8" stroke-width="1.400"/></svg></button>
    <button aria-label="Recorder"><svg width="16" height="16" viewBox="0 0 16 16"><rect width="16" height="16" rx="2" fill="#fff"/><path d="M3 7V5q0-2 2-2h6q2 0 2 2M13 9v2q0 2-2 2H5q-2 0-2-2" fill="none" stroke="#f45b6d" stroke-width="1.500"/><circle cx="6" cy="8" r="1" fill="#f45b6d"/><circle cx="10" cy="8" r="1" fill="#f45b6d"/></svg></button>
    <button aria-label="Security"><svg width="16" height="16" viewBox="0 0 16 16"><path d="M7.500 0L15 3v4c0 4-3 7-7.500 8.500C3 14 0 11 0 7V3z" fill="#2aa1ea"/><circle cx="11" cy="11.500" r="4.500" fill="#15903d"/><path d="M9 11.500l1.500 1.500 3-3" fill="none" stroke="#fff" stroke-width="1.200"/></svg></button>
    <button aria-label="Remote desktop"><svg width="16" height="16" viewBox="0 0 16 16"><path d="M0 0h16v16H0z" fill="#ef443b"/><path d="M7 4l4 4-4 4-4-4z" fill="#fff"/><path d="M9.500 4l4 4-4 4" fill="none" stroke="#fff" stroke-width="1.400"/></svg></button>
    <button aria-label="Quick tool"><svg width="16" height="16" viewBox="0 0 16 16"><rect width="16" height="16" rx="2" fill="#439b40"/><circle cx="8" cy="7.500" r="4" fill="none" stroke="#fff" stroke-width="2"/><path d="M8.500 10.500l3 3.500" stroke="#fff" stroke-width="2"/></svg></button>
    <button class="lang-btn">ENG<br>US</button>
    <button class="net" aria-label="Network"><svg width="17" height="17" viewBox="0 0 17 17"><path d="M11 2H1v11h11V8M4 16h8M7 13v3M12 1h4v4h-4zM14 5v11" fill="none" stroke="#eee" stroke-width="1.200"/></svg></button>
    <button aria-label="Volume"><svg width="16" height="16" viewBox="0 0 16 16"><path d="M1 6h3l4-4v10L4 9H1z" fill="none" stroke="#eee" stroke-width="1.200"/><circle cx="11" cy="11" r="4.500" fill="#eee"/><path d="M9 9l4 4M13 9l-4 4" stroke="#222" stroke-width="1.200"/></svg></button>
    <button class="clock">12:22 PM<br>8/9/2022</button>
    <button class="moon" aria-label="Notifications"><svg width="14" height="16" viewBox="0 0 14 16"><path d="M8 1a7 7 0 1 1-7 11c4 0 8-4 7-11z" fill="none" stroke="#eee" stroke-width="1.200"/></svg></button>
  </div>
</footer>
</body>
</html>
```
FILE: styles.css
```css
* { box-sizing: border-box; }
body {
  margin: 0; min-height: 100vh; display: flex; flex-direction: column; overflow: hidden;
  background: #191919; color: #dcdcdc;
  font: 10px/14px "Open Sans", "Noto Sans", sans-serif;
}
button {
  display: flex; align-items: center; justify-content: center;
  padding: 0; border: 0; background: none; color: inherit; font: inherit; flex: none;
}
svg { display: block; flex: none; fill: #ddd; }
.defs { display: none; }
i { font-style: normal; display: block; }
hr { margin: 0; border: 0; }
ul { margin: 0; padding: 0; list-style: none; }
input, select { font: inherit; color: inherit; margin: 0; }

/* Menu bar */
.menubar { display: flex; align-items: flex-start; height: 25px; background: #323232; border-bottom: 1px solid #222; }
.ps-logo {
  width: 16px; height: 15px; margin: 4px 0 0 5px; border-radius: 2px; background: #001e36;
  color: #31a8ff; font-size: 9px; font-weight: 700; line-height: 14px; text-align: center;
}
.menus { display: flex; gap: 10px; margin-left: 14px; height: 24px; font-size: 12px; flex: 1; }
.window-buttons { display: flex; height: 19px; margin-right: 4px; border: 1px solid #272727; border-top: 0; }
.window-buttons button { width: 28px; border-right: 1px solid #272727; }
.window-buttons .wide { width: 46px; border: 0; }

/* Options bar */
.options { display: flex; align-items: center; height: 34px; background: #323232; border-bottom: 1px solid #222; }
.grip-v { width: 3px; height: 20px; margin-left: 4px; background: repeating-linear-gradient(#282828 0 1px, transparent 1px 2px); }
.cell { display: flex; align-items: center; height: 22px; border-right: 1px solid #272727; }
.home { width: 47px; padding-right: 4px; }
.tool-pick { width: 49px; gap: 8px; color: #d6d6d6; }
.tool-pick .dim { color: #888; }
.auto { width: 154px; padding-left: 7px; gap: 5px; }
.transform { width: 152px; padding-left: 8px; gap: 5px; }
.options input[type=checkbox] {
  appearance: none; width: 10px; height: 10px; border: 1px solid #777; border-radius: 2px;
}
.options input[type=checkbox]:checked {
  border-color: #ddd; background: #ddd url("data:image/svg+xml,%3Csvg xmlns='http://www.w3.org/2000/svg' viewBox='0 0 10 10'%3E%3Cpath d='M1 5l3 3 4-7' fill='none' stroke='%23222' stroke-width='1.800'/%3E%3C/svg%3E") center / 8px no-repeat;
}
.select {
  appearance: none; height: 17px; padding: 0 16px 0 5px; border: 1px solid #454545; border-radius: 2px;
  background: #282828 url("data:image/svg+xml,%3Csvg xmlns='http://www.w3.org/2000/svg' viewBox='0 0 10 10'%3E%3Cpath d='M1.500 3L5 7l3.500-4' fill='none' stroke='%23aaa' stroke-width='1.200'/%3E%3C/svg%3E") right 3px center / 9px no-repeat;
}
.layer-select { width: 55px; height: 20px; margin-left: auto; margin-right: 8px; padding-left: 7px; }
.align-h, .align-v { width: 129px; padding-left: 14px; gap: 11px; }
.align-h .spaced { margin-left: 10px; }
.align-v .spaced { margin-left: 12px; }
.dots { width: 43px; }
.mode3d { border: 0; padding-left: 10px; gap: 8px; color: #888; }
.mode3d span { width: 50px; }
.mode3d svg { stroke: #7c7c7c; }
.mode3d .f { fill: #7c7c7c; stroke: none; }
.right-tools { display: flex; align-items: center; margin-left: auto; padding-right: 5px; gap: 11px; }
.share { width: 53px; height: 24px; border-radius: 12px; background: #1473e6; color: #fff; font-size: 10px; font-weight: 600; }
.workspace-switch { margin-left: 3px; }
.right-tools > svg { color: #aaa; margin-left: -3px; }

/* Document window */
.workspace { position: relative; display: flex; flex: 1; }
.document { flex: 1; min-width: 0; display: flex; flex-direction: column; }
.tabs { display: flex; height: 29px; background: #262626; border-bottom: 1px solid #222; }
.tab {
  display: flex; align-items: center; gap: 4px; padding: 0 8px 0 10px; border-right: 1px solid #202020;
  color: #999; font-size: 11px; font-weight: 600; white-space: nowrap;
}
.tab.active { background: #323232; color: #e4e4e4; }
.tab svg { color: #999; }
.doc-body { display: flex; flex: 1; min-height: 0; }
.view { flex: 1; min-width: 0; display: flex; flex-direction: column; }
.ruler-h {
  display: flex; height: 17px; padding-left: 23px; overflow: hidden; color: #a0a0a0; font-size: 12px; line-height: 19px;
  background:
    linear-gradient(90deg, #6c6c6c 1px, transparent 1px) 23px 0 / 48px 17px repeat-x,
    linear-gradient(90deg, #6c6c6c 1px, transparent 1px) 23px 12px / 24px 5px repeat-x,
    linear-gradient(90deg, #606060 1px, transparent 1px) 23px 14px / 6px 3px repeat-x,
    #282828;
}
.ruler-h span { flex: none; width: 48px; padding-left: 1px; }
.view-row { display: flex; flex: 1; min-height: 0; }
.ruler-v {
  width: 18px; height: 910px; padding-top: 25px; overflow: hidden; color: #a0a0a0; font-size: 12px; line-height: 12px;
  border-right: 1px solid #222;
  background:
    linear-gradient(#6c6c6c 1px, transparent 1px) 1px 25px / 17px 48px repeat-y,
    linear-gradient(#6c6c6c 1px, transparent 1px) 12px 25px / 5px 24px repeat-y,
    linear-gradient(#606060 1px, transparent 1px) 14px 25px / 3px 6px repeat-y,
    #282828;
}
.ruler-v span { display: block; width: 9px; height: 48px; padding: 3px 0 0 2px; overflow-wrap: anywhere; }
.canvas { position: relative; flex: 1; background: #191919; }
.artboard { position: absolute; left: 245px; top: 168px; width: 1067px; height: 600px; background: #fff; }
.scroll-v { width: 17px; display: flex; flex-direction: column; align-items: center; padding: 5px 0; background: #282828; color: #888; }
.scroll-v .space-a { flex: 92; }
.scroll-v .thumb { flex: 531; width: 12px; background: #474747; }
.scroll-v .space-b { flex: 269; }
.status { display: flex; height: 16px; background: #282828; line-height: 16px; }
.status .zoom { width: 48px; padding-left: 8px; }
.status .info { width: 185px; display: flex; justify-content: space-between; padding: 1px 3px 0 27px; background: #323232; color: #bbb; }
.scroll-h { flex: 1; display: flex; align-items: center; padding: 0 5px; color: #888; }
.scroll-h .space-a { flex: 528; }
.scroll-h .thumb { flex: 646; height: 12px; background: #474747; }
.scroll-h .space-b { flex: 424; }
.corner { width: 17px; background: #2d2d2d; }

/* Icon dock */
.grip { width: 16px; height: 4px; background: repeating-linear-gradient(90deg, #222 0 1px, transparent 1px 2px); }
.dock { width: 40px; padding-right: 2px; background: #323232; border-left: 1px solid #222; }
.dock-head { display: flex; justify-content: flex-end; align-items: center; height: 12px; padding-right: 4px; background: #262626; color: #ccc; }
.dock-group { display: flex; flex-direction: column; align-items: center; height: 41px; padding-top: 3px; border-bottom: 2px solid #232323; }
.dock-group button { width: 28px; height: 24px; margin-top: 5px; border-radius: 2px; }
.dock-group:nth-child(2) { height: 70px; }
.dock-group:nth-child(3) { height: 68px; }
.dock-group .on { background: #1e1e1e; outline: 1px solid #484848; }

/* Floating tool bar */
.toolbar, .mini-panel { position: absolute; background: #323232; display: flex; flex-direction: column; align-items: center; }
.toolbar { left: 1px; top: 16px; width: 38px; height: 556px; border-radius: 4px 4px 0 0; border-right: 1px solid #252525; }
.bar-head { display: flex; justify-content: space-between; align-items: center; width: 100%; height: 12px; padding: 0 3px 0 6px; background: #242424; color: #bbb; border-radius: 4px 4px 0 0; }
.bar-head svg + svg { color: #888; }
.toolbar .grip { margin: 5px 0 8px; }
.tool { position: relative; width: 32px; height: 26px; border-radius: 2px; }
.tool.on { background: #1e1e1e; outline: 1px solid #444; outline-offset: -1px; }
.tool.more::after { content: ""; position: absolute; right: 3px; bottom: 3px; border: 2px solid transparent; border-right-color: #bbb; border-bottom-color: #bbb; }
.mini { display: flex; gap: 7px; height: 21px; align-items: center; }
.swatches { position: relative; width: 30px; height: 31px; margin-bottom: 3px; }
.swatches button { position: absolute; width: 19px; height: 19px; border: 1px solid #111; }
.back { right: 0; bottom: 1px; background: #fff; }
.front { left: 0; top: 0; background: #000; box-shadow: inset 0 0 0 1px #fff; }
.mini-panel { right: 593px; top: 91px; width: 38px; height: 81px; border: 1px solid #2a2a2a; border-top: 0; border-radius: 4px 4px 0 0; }
.mini-panel .grip { margin: 4px 0 9px; }
.mini-panel button { height: 18px; margin-bottom: 12px; }

/* Panels */
.panel { position: absolute; background: #323232; box-shadow: 0 0 0 1px #222; }
.panel-head { display: flex; justify-content: flex-end; align-items: center; gap: 9px; height: 13px; padding-right: 3px; background: #262626; color: #ccc; }
.panel-head svg + svg { color: #888; }
.panel-tabs { display: flex; align-items: center; height: 28px; padding-right: 4px; background: #262626; border-bottom: 1px solid #222; color: #999; font-weight: 600; }
.panel-tabs button { height: 28px; padding: 0 8px 3px; border-right: 1px solid #222; }
.panel-tabs .active { background: #323232; color: #f0f0f0; }
.panel-tabs .fill { flex: 1; }
.panel-tabs .bar { width: 1px; height: 12px; margin: 0 6px; background: #999; }
.character { right: 40px; top: 82px; width: 215px; }
.char-body { padding: 13px 4px 2px 5px; }
.row { display: flex; align-items: center; height: 17px; margin-bottom: 7px; }
.row.tight { margin-bottom: 3px; }
.split { background-color: #282828; background-image: linear-gradient(#454545, #454545), url("data:image/svg+xml,%3Csvg xmlns='http://www.w3.org/2000/svg' viewBox='0 0 10 10'%3E%3Cpath d='M1.500 3L5 7l3.500-4' fill='none' stroke='%23aaa' stroke-width='1.200'/%3E%3C/svg%3E"); background-size: 1px 17px, 9px; background-position: right 14px center, right 3px center; background-repeat: no-repeat; }
.family { width: 120px; margin-right: auto; }
.style { width: 75px; }
.glyph { width: 20px; font: bold 12px/14px "Liberation Serif", serif; text-align: center; }
.size { width: 75px; padding-left: 2px; }
.lead { margin-left: auto; margin-right: 3px; }
.va-icon span { display: block; width: 18px; height: 11px; background: #ddd; color: #222; font: bold 11px/11px "Liberation Sans", sans-serif; text-align: center; }
.va-icon svg { margin-top: 1px; }
.lead-val { width: 72px; }
.field { height: 17px; padding: 0 5px; border: 1px solid #454545; background: #282828; }
.scale, .shift { width: 55px; margin-left: 20px; }
.scale { padding-left: 7px; }
.shift { padding-left: 2px; }
.hscale { width: 56px; }
.color-row .color-label { margin-left: auto; margin-right: 8px; color: #aaa; }
.color { width: 56px; height: 19px; border: 1px solid #111; background: #fff; }
.glyph-row { display: grid; grid-template-columns: repeat(8, 1fr); align-items: center; height: 28px; padding: 2px 6px 0 4px; font: bold 14px/14px "Liberation Serif", serif; }
.glyph-row button { display: block; height: 20px; line-height: 20px; }
.glyph-row sup, .glyph-row sub, .glyph-row small { font-size: 9px; line-height: 1px; }
.glyph-row.light { font-weight: 400; font-size: 16px; color: #8a8a8a; }
.glyph-row .lit { color: #ddd; }
.glyph-row .over { text-decoration: overline; }
.row.last { height: 20px; margin: 2px 0 0; }
.select.lang { width: 116px; height: 20px; padding-left: 9px; }
.select.sharp { width: 68px; height: 20px; padding-left: 8px; }
.aa { flex: 1; text-align: center; font: 13px/13px "Liberation Serif", serif; }
.aa sup { font-size: 11px; line-height: 9px; }

.layers { right: 208px; top: 152px; width: 294px; height: 708px; display: flex; flex-direction: column; }
.filter-row, .blend-row, .lock-row { display: flex; align-items: center; border-bottom: 1px solid #262626; padding-left: 3px; }
.filter-row { height: 32px; padding-top: 6px; }
.filter-row .kind-wrap, .filter-row button { margin-bottom: 2px; }
.filter-row button { width: 24px; height: 16px; }
.kind-wrap { position: relative; margin-right: 6px; }
.kind-wrap svg { position: absolute; left: 9px; top: 5px; }
.kind { display: block; width: 88px; height: 20px; padding-left: 19px; }
.toggle { width: 9px; height: 19px; margin-left: 6px; margin-bottom: 4px; border-radius: 5px; border: 1px solid #484848; background: radial-gradient(circle at 50% 4px, #ccc 3px, #222 4px); }
.blend-row { height: 28px; color: #aaa; }
.normal { width: 130px; height: 20px; padding-left: 5px; margin-right: 5px; color: #ddd; }
.blend-row label, .lock-row label { width: 38px; margin-right: 3px; text-align: right; white-space: nowrap; }
.lock-row { height: 31px; color: #aaa; border: 0; padding-bottom: 3px; }
.lock-label { width: 29px; padding-left: 3px; margin-right: 2px; }
.lock-row button { width: 22px; }
.lock-row label { width: 33px; margin-left: -1px; }
.pct { display: flex; align-items: center; width: 51px; height: 17px; border: 1px solid #454545; border-radius: 2px; background: #282828; color: #ddd; }
.pct input { width: 36px; height: 15px; padding: 0 0 0 4px; border: 0; border-right: 1px solid #454545; background: none; margin-right: 2px; }
.layer-list { flex: 1; background: #2b2b2b; }
.layer-list li { display: flex; width: 278px; height: 28px; }
.eye { width: 30px; background: #323232; }
.layer { flex: 1; display: flex; align-items: center; gap: 7px; padding: 0 2px; margin-bottom: 1px; background: #323232; }
.selected .layer { background: #4b4b4b; border-bottom: 1px solid #5a5a5a; }
.thumb-frame, .thumb-plain { width: 36px; height: 24px; flex: none; }
.thumb-frame { padding: 3px 2px; border: 1px solid #fff; border-image: linear-gradient(90deg, #fff 33%, transparent 33% 67%, #fff 67%) 1; }
.checker { width: 30px; height: 16px; background: repeating-conic-gradient(#ccc 0 25%, #fff 0 50%) 0 0 / 10px 10px; }
.thumb-plain { height: 20px; border: 1px solid #222; border-width: 1px 3px; background: #fff; }
.layer-actions { display: flex; height: 25px; padding-left: 85px; border-top: 1px solid #262626; border-bottom: 1px solid #222; }
.layer-actions button { width: 27px; }
.layer-actions .fx { background: #454545; font: bold 14px/14px "Liberation Serif", serif; }
.fx, .caret { position: relative; }
.fx::after, .caret::after { content: ""; position: absolute; right: 4px; bottom: 1px; border: 2px solid transparent; border-top-color: #fff; }
.panel-grip { display: flex; justify-content: center; align-items: center; height: 8px; }
.context-menu {
  position: absolute; left: 112px; top: 484px; width: 157px; padding: 3px 2px 1px; border: 1px solid #a0a0a0;
  background: #f0f0f0; box-shadow: 3px 3px 3px #0008; color: #111;
}
.context-menu button { width: 100%; height: 17px; padding-left: 19px; justify-content: flex-start; font: 12px/17px "DejaVu Sans Condensed", "Noto Sans", sans-serif; white-space: nowrap; }
.context-menu hr { height: 1px; margin: 4px 0 6px; background: #bbb; }

/* Task bar */
.taskbar {
  display: grid; grid-template-columns: 1fr auto 1fr; height: 49px;
  background: linear-gradient(90deg, #3a1a1b 0, #451312 7%, #3a1a16 15%, #371a1e 22%, #381914 30%, #331b1a 48%, #351c18 62%, #2b1e1e 75%, #241f1f 88%, #201f1f 100%);
}
.widgets { display: flex; align-items: center; padding-left: 16px; }
.apps { display: flex; align-items: center; padding-left: 2px; }
.apps button { position: relative; width: 44px; height: 42px; border-radius: 4px; }
.apps .open::after { content: ""; position: absolute; left: 19px; bottom: 2px; width: 6px; height: 3px; border-radius: 2px; background: #a09898; }
.apps .current { background: #fff1; box-shadow: inset 0 0 0 1px #fff1; }
.apps .current::after { left: 14px; width: 16px; background: #e98570; }
.apps .notes { background: #4a2c2b; }
.apps .notes::after { background: #ff8fa0; }
.adobe { width: 22px; height: 22px; border-radius: 4px; font-size: 12px; font-weight: 700; line-height: 21px; }
.ps { background: #001e36; color: #31a8ff; }
.ai { background: #330000; color: #ff9a00; }
.tray { display: flex; align-items: center; justify-content: flex-end; padding-right: 20px; color: #f0f0f0; font-size: 11px; line-height: 16px; }
.tray button { width: 24px; height: 40px; white-space: nowrap; }
.tray .lang-btn { width: 44px; }
.tray .net { width: 31px; }
.tray .clock { width: 60px; justify-content: flex-end; text-align: right; }
.tray .moon { width: 14px; margin-left: 8px; }
```
